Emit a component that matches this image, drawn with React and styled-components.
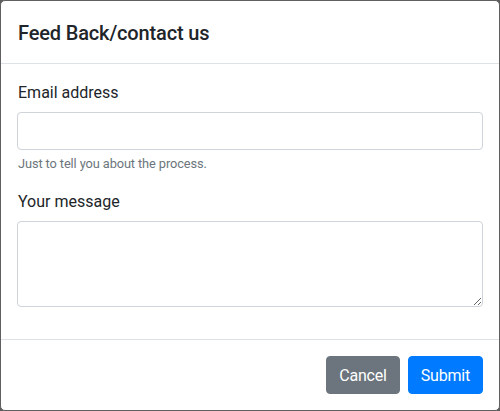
import React from "react";
import styled, { createGlobalStyle } from "styled-components";

const Global = createGlobalStyle`
  html, body { margin: 0; padding: 0; background: #5c5c5c; }
  body {
    font-family: Roboto, "Noto Sans", "Liberation Sans", sans-serif;
    color: #212529;
    font-size: 16px;
    line-height: 1.5;
  }
  *, *::before, *::after { box-sizing: border-box; }
`;

const Modal = styled.div`
  width: 500px;
  background: #fff;
  border: 1px solid #5f5f5f;
  border-radius: 5px;
  display: flex;
  flex-direction: column;
  overflow: hidden;
`;

const Header = styled.div`
  padding: 17px 16px 15px;
  border-bottom: 1px solid #dee2e6;
`;

const Title = styled.h5`
  margin: 0;
  font-size: 20px;
  font-weight: 500;
  line-height: 1.5;
  letter-spacing: -0.15px;
  padding-left: 1px;
`;

const Body = styled.div`
  padding: 16px;
`;

const Group = styled.div`
  margin-bottom: 16px;
  display: flex;
  flex-direction: column;
`;

const Label = styled.label`
  display: block;
  margin-bottom: 7px;
  padding-top: 1px;
  font-size: 16px;
  line-height: 24px;
  padding-left: 1px;
`;

const Input = styled.input`
  display: block;
  width: 100%;
  height: 38px;
  padding: 6px 12px;
  font: inherit;
  color: #495057;
  background: #fff;
  border: 1px solid #ced4da;
  border-radius: 4px;
  outline: none;
`;

const TextArea = styled.textarea`
  display: block;
  width: 100%;
  height: 86px;
  padding: 6px 12px;
  font: inherit;
  color: #495057;
  background: #fff;
  border: 1px solid #ced4da;
  border-radius: 4px;
  outline: none;
  resize: vertical;
`;

const Help = styled.small`
  display: block;
  margin-top: 4px;
  font-size: 12.8px;
  line-height: 19.2px;
  letter-spacing: -0.1px;
  color: #6c757d;
  padding-left: 1px;
`;

const Footer = styled.div`
  display: flex;
  justify-content: flex-end;
  align-items: center;
  padding: 12px;
  border-top: 1px solid #dee2e6;
`;

const Button = styled.button`
  margin: 4px;
  height: 38px;
  padding: 7px 12px 5px;
  font: inherit;
  font-size: 16px;
  line-height: 24px;
  letter-spacing: -0.2px;
  color: #fff;
  border: 1px solid ${(p) => (p.$variant === "primary" ? "#007bff" : "#6c757d")};
  background: ${(p) => (p.$variant === "primary" ? "#007bff" : "#6c757d")};
  border-radius: 4px;
  cursor: pointer;
`;

export default function App() {
  return (
    <>
      <Global />
      <Modal>
        <Header>
          <Title>Feed Back/contact us</Title>
        </Header>
        <Body>
          <Group>
            <Label htmlFor="email">Email address</Label>
            <Input id="email" type="email" />
            <Help>Just to tell you about the process.</Help>
          </Group>
          <Group>
            <Label htmlFor="msg">Your message</Label>
            <TextArea id="msg" rows={3} />
          </Group>
        </Body>
        <Footer>
          <Button $variant="secondary">Cancel</Button>
          <Button $variant="primary">Submit</Button>
        </Footer>
      </Modal>
    </>
  );
}
